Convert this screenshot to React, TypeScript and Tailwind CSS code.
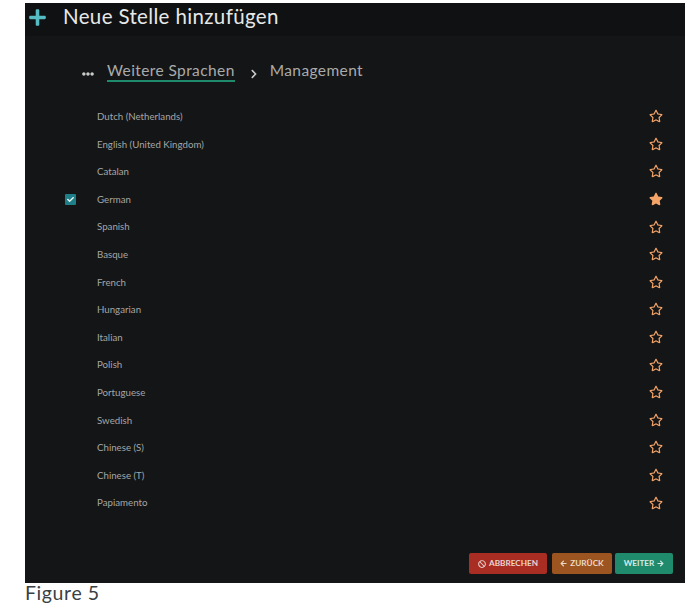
import { FaStar, FaRegStar, FaPlus, FaBan, FaArrowLeft, FaArrowRight, FaEllipsisH, FaChevronRight, FaCheck } from "react-icons/fa";

const sprachen = [
  "Dutch (Netherlands)",
  "English (United Kingdom)",
  "Catalan",
  "German",
  "Spanish",
  "Basque",
  "French",
  "Hungarian",
  "Italian",
  "Polish",
  "Portuguese",
  "Swedish",
  "Chinese (S)",
  "Chinese (T)",
  "Papiamento",
];

export default function App() {
  return (
    <div className="w-[695px] h-[603px] bg-white overflow-hidden font-['Lato','Liberation_Sans',sans-serif] pt-[3px] pl-[25px]">
      <div className="w-[660px] h-[580px] bg-[#141516] flex flex-col">
        <header className="h-[33px] bg-[#101112] flex items-center pl-[3px] gap-[16px] shrink-0">
          <FaPlus size={19} className="text-[#56bcc4] -mt-[4px]" />
          <h1 className="text-[20.5px] leading-none tracking-[0.35px] text-[#e6e8e8] -mt-[6px]">Neue Stelle hinzufügen</h1>
        </header>

        <nav className="h-[50px] mt-[10px] pl-[57px] flex items-center shrink-0">
          <FaEllipsisH size={12} className="text-[#c9cbcb] mt-[5px]" />
          <span className="ml-[13px] text-[15.5px] leading-[19px] tracking-[0.4px] text-[#a9abab] border-b-2 border-[#1f8a6c]">Weitere Sprachen</span>
          <FaChevronRight size={10} className="ml-[14px] mt-[5px] text-[#c9cbcb]" />
          <span className="ml-[11px] text-[15.5px] leading-[19px] tracking-[0.4px] text-[#a9abab] -mt-[2px]">Management</span>
        </nav>

        <ul className="mt-[6.5px] flex flex-col shrink-0">
          {sprachen.map((name) => {
            const aktiv = name === "German";
            return (
              <li key={name} className="h-[27.6px] flex items-center pl-[40px] pr-[22px]">
                <span className="w-[11px] h-[11px] flex items-center justify-center">
                  {aktiv && (
                    <span className="w-[11px] h-[11px] rounded-[1px] bg-[#1f7f89] flex items-center justify-center">
                      <FaCheck size={7} className="text-[#e8f4f4]" />
                    </span>
                  )}
                </span>
                <span className="ml-[21px] flex-1 text-[9.7px] text-[#a4a6a6]">{name}</span>
                {aktiv ? (
                  <FaStar size={14} className="text-[#f4a469]" />
                ) : (
                  <FaRegStar size={14} className="text-[#f4a469]" />
                )}
              </li>
            );
          })}
        </ul>

        <footer className="mt-auto mb-[9px] flex justify-end gap-[3px] pr-[12px]">
          <button className="h-[21px] w-[78px] mr-[2px] rounded-[2px] bg-[#a92d23] text-[#e9d5d0] text-[8.2px] font-bold flex items-center justify-center gap-[3px]">
            <FaBan size={8} />
            ABBRECHEN
          </button>
          <button className="h-[21px] w-[60px] rounded-[2px] bg-[#9c5420] text-[#ecd9c4] text-[8.2px] font-bold flex items-center justify-center gap-[3px]">
            <FaArrowLeft size={7} />
            ZURÜCK
          </button>
          <button className="h-[21px] w-[58px] rounded-[2px] bg-[#1f8a6c] text-[#d5ebe4] text-[8.2px] font-bold flex items-center justify-center gap-[3px]">
            WEITER
            <FaArrowRight size={7} />
          </button>
        </footer>
      </div>
      <p className="text-[19.5px] leading-[20px] tracking-[0.6px] text-[#3a3f44]">Figure 5</p>
    </div>
  );
}
